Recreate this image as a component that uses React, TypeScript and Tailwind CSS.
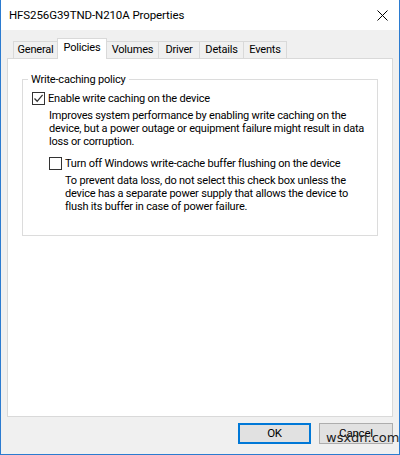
import React from "react";

const font = { fontFamily: 'Roboto, "Liberation Sans", Arial, sans-serif' };

function CheckIcon() {
  return (
    <svg width="11" height="11" viewBox="0 0 11 11">
      <path d="M1.5 5.5 L4.2 8.3 L9.6 1.8" fill="none" stroke="#333" strokeWidth="1.3" />
    </svg>
  );
}

export default function App() {
  return (
    <div
      className="flex h-[455px] w-[400px] flex-col border-x border-b border-[#2b7bd0] bg-[#f0f0f0] text-[11px] leading-[13px] tracking-[-0.2px] text-black"
      style={font}
    >
      {/* Title bar */}
      <div className="flex h-[30px] shrink-0 items-center justify-between bg-white pl-[8px] pr-[11px]">
        <span className="text-[11.5px] tracking-[-0.1px] text-black">HFS256G39TND-N210A Properties</span>
        <svg width="11" height="11" viewBox="0 0 11 11">
          <path d="M0.5 0.5 L10.5 10.5 M10.5 0.5 L0.5 10.5" stroke="#000" strokeWidth="1" />
        </svg>
      </div>

      {/* Body */}
      <div className="flex flex-1 flex-col px-[6px] pt-[8px]">
        {/* Tabs */}
        <div className="flex items-end pl-[6px]">
          <div className="flex h-[17px] w-[44px] items-start justify-center border border-b-0 border-r-0 border-[#d9d9d9] pt-[1px]">General</div>
          <div className="relative z-10 -mb-[1px] flex h-[21px] w-[50px] items-start justify-center border border-b-0 border-[#d9d9d9] bg-white pt-[2px]">Policies</div>
          <div className="flex h-[17px] w-[52px] items-start justify-center border border-b-0 border-l-0 border-[#d9d9d9] pt-[1px]">Volumes</div>
          <div className="flex h-[17px] w-[41px] items-start justify-center border border-b-0 border-l-0 border-[#d9d9d9] pt-[1px]">Driver</div>
          <div className="flex h-[17px] w-[44px] items-start justify-center border border-b-0 border-l-0 border-[#d9d9d9] pt-[1px]">Details</div>
          <div className="flex h-[17px] w-[43px] items-start justify-center border border-b-0 border-l-0 border-[#d9d9d9] pt-[1px]">Events</div>
        </div>

        {/* Panel */}
        <div className="h-[359px] border border-[#d9d9d9] bg-white px-[14px] pt-[20px]">
          <div className="relative h-[157px] border border-[#dcdcdc] pl-[9px] pt-[12px]">
            <span className="absolute -top-[7px] left-[5px] bg-white px-[3px] leading-[13px]">Write-caching policy</span>
            <div className="flex items-center gap-[3px]">
              <div className="flex h-[13px] w-[13px] items-center justify-center border border-[#333]">
                <CheckIcon />
              </div>
              <span className="whitespace-nowrap">Enable write caching on the device</span>
            </div>
            <div className="mt-[4px] whitespace-nowrap pl-[17px]">
              Improves system performance by enabling write caching on the
              <br />
              device, but a power outage or equipment failure might result in data
              <br />
              loss or corruption.
            </div>
            <div className="mt-[9px] flex items-center gap-[3px] pl-[17px]">
              <div className="h-[13px] w-[13px] border border-[#333] bg-white" />
              <span className="whitespace-nowrap">Turn off Windows write-cache buffer flushing on the device</span>
            </div>
            <div className="mt-[4px] whitespace-nowrap pl-[33px]">
              To prevent data loss, do not select this check box unless the
              <br />
              device has a separate power supply that allows the device to
              <br />
              flush its buffer in case of power failure.
            </div>
          </div>
        </div>

        {/* Buttons */}
        <div className="mt-[6px] flex justify-end gap-[8px]">
          <button className="flex h-[21px] w-[73px] items-center justify-center border-2 border-[#0078d7] bg-[#e1e1e1] text-[11.5px]">
            OK
          </button>
          <div className="relative">
            <button className="flex h-[21px] w-[74px] items-center justify-center border border-[#adadad] bg-[#e1e1e1] text-[11.5px]">
              Cancel
            </button>
            <span
              className="absolute left-[7px] top-[8px] whitespace-nowrap text-[13px] leading-[13px] tracking-normal text-[#222]"
              style={{ fontFamily: '"DejaVu Sans", sans-serif' }}
            >
              wsxdn.com
            </span>
          </div>
        </div>
      </div>
    </div>
  );
}
